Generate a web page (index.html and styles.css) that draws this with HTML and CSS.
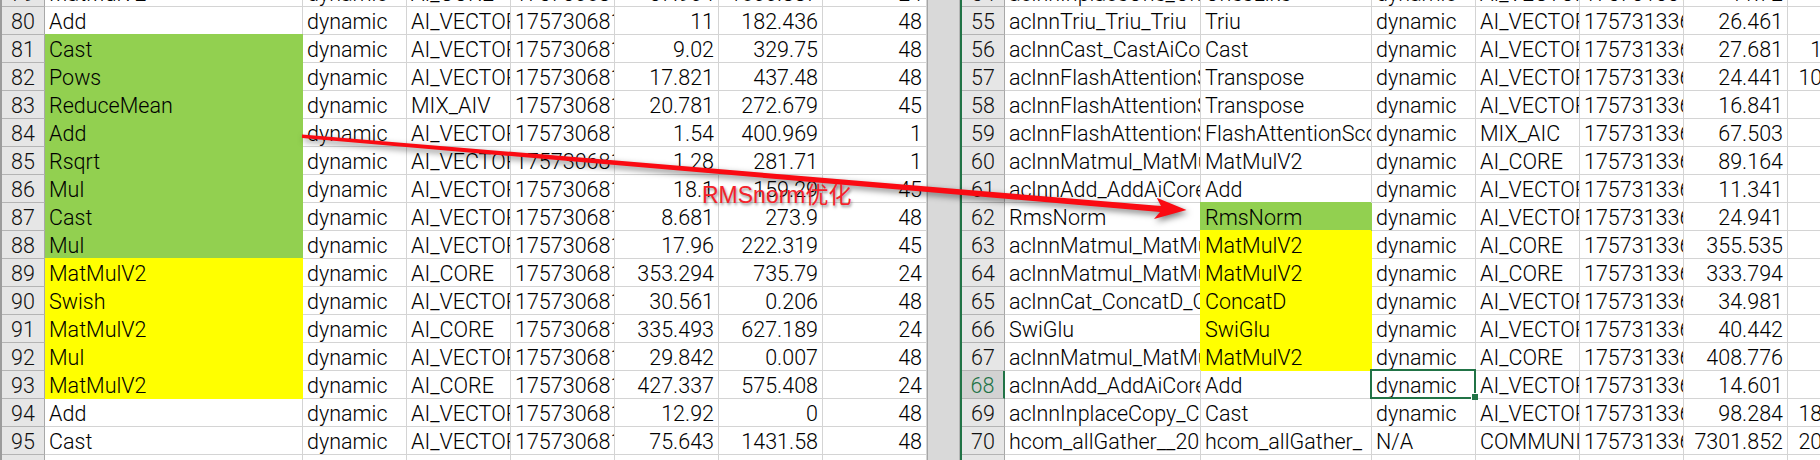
FILE: index.html
```html
<!DOCTYPE html>
<html lang="en">
<head>
<meta charset="utf-8">
<title>Sheet comparison</title>
<link rel="stylesheet" href="styles.css">
</head>
<body>
<div class="app">
  <section class="pane left">
    <div class="rows">
      <div class="row"><div class="h">79</div><div class="c">MatMulV2</div><div class="c">dynamic</div><div class="c">AI_CORE</div><div class="c">1757306815</div><div class="c n">37.904</div><div class="c n">1600.887</div><div class="c n">24</div></div>
      <div class="row"><div class="h">80</div><div class="c">Add</div><div class="c">dynamic</div><div class="c">AI_VECTOR_CORE</div><div class="c">1757306815</div><div class="c n">11</div><div class="c n">182.436</div><div class="c n">48</div></div>
      <div class="row"><div class="h">81</div><div class="c g">Cast</div><div class="c">dynamic</div><div class="c">AI_VECTOR_CORE</div><div class="c">1757306815</div><div class="c n">9.02</div><div class="c n">329.75</div><div class="c n">48</div></div>
      <div class="row"><div class="h">82</div><div class="c g">Pows</div><div class="c">dynamic</div><div class="c">AI_VECTOR_CORE</div><div class="c">1757306815</div><div class="c n">17.821</div><div class="c n">437.48</div><div class="c n">48</div></div>
      <div class="row"><div class="h">83</div><div class="c g">ReduceMean</div><div class="c">dynamic</div><div class="c">MIX_AIV</div><div class="c">1757306815</div><div class="c n">20.781</div><div class="c n">272.679</div><div class="c n">45</div></div>
      <div class="row"><div class="h">84</div><div class="c g">Add</div><div class="c">dynamic</div><div class="c">AI_VECTOR_CORE</div><div class="c">1757306815</div><div class="c n">1.54</div><div class="c n">400.969</div><div class="c n">1</div></div>
      <div class="row"><div class="h">85</div><div class="c g">Rsqrt</div><div class="c">dynamic</div><div class="c">AI_VECTOR_CORE</div><div class="c">1757306815</div><div class="c n">1.28</div><div class="c n">281.71</div><div class="c n">1</div></div>
      <div class="row"><div class="h">86</div><div class="c g">Mul</div><div class="c">dynamic</div><div class="c">AI_VECTOR_CORE</div><div class="c">1757306815</div><div class="c n">18.1</div><div class="c n">159.29</div><div class="c n">45</div></div>
      <div class="row"><div class="h">87</div><div class="c g">Cast</div><div class="c">dynamic</div><div class="c">AI_VECTOR_CORE</div><div class="c">1757306815</div><div class="c n">8.681</div><div class="c n">273.9</div><div class="c n">48</div></div>
      <div class="row"><div class="h">88</div><div class="c g">Mul</div><div class="c">dynamic</div><div class="c">AI_VECTOR_CORE</div><div class="c">1757306815</div><div class="c n">17.96</div><div class="c n">222.319</div><div class="c n">45</div></div>
      <div class="row"><div class="h">89</div><div class="c y">MatMulV2</div><div class="c">dynamic</div><div class="c">AI_CORE</div><div class="c">1757306815</div><div class="c n">353.294</div><div class="c n">735.79</div><div class="c n">24</div></div>
      <div class="row"><div class="h">90</div><div class="c y">Swish</div><div class="c">dynamic</div><div class="c">AI_VECTOR_CORE</div><div class="c">1757306815</div><div class="c n">30.561</div><div class="c n">0.206</div><div class="c n">48</div></div>
      <div class="row"><div class="h">91</div><div class="c y">MatMulV2</div><div class="c">dynamic</div><div class="c">AI_CORE</div><div class="c">1757306815</div><div class="c n">335.493</div><div class="c n">627.189</div><div class="c n">24</div></div>
      <div class="row"><div class="h">92</div><div class="c y">Mul</div><div class="c">dynamic</div><div class="c">AI_VECTOR_CORE</div><div class="c">1757306815</div><div class="c n">29.842</div><div class="c n">0.007</div><div class="c n">48</div></div>
      <div class="row"><div class="h">93</div><div class="c y">MatMulV2</div><div class="c">dynamic</div><div class="c">AI_CORE</div><div class="c">1757306815</div><div class="c n">427.337</div><div class="c n">575.408</div><div class="c n">24</div></div>
      <div class="row"><div class="h">94</div><div class="c">Add</div><div class="c">dynamic</div><div class="c">AI_VECTOR_CORE</div><div class="c">1757306815</div><div class="c n">12.92</div><div class="c n">0</div><div class="c n">48</div></div>
      <div class="row"><div class="h">95</div><div class="c">Cast</div><div class="c">dynamic</div><div class="c">AI_VECTOR_CORE</div><div class="c">1757306815</div><div class="c n">75.643</div><div class="c n">1431.58</div><div class="c n">48</div></div>
      <div class="row"><div class="h"></div><div class="c"></div><div class="c"></div><div class="c"></div><div class="c"></div><div class="c"></div><div class="c"></div><div class="c"></div></div>
    </div>
  </section>
  <div class="splitter"></div>
  <section class="pane right">
    <div class="rows">
      <div class="row"><div class="h">54</div><div class="c">aclnnInplaceOne_OnesLike</div><div class="c">OnesLike</div><div class="c">dynamic</div><div class="c">AI_VECTOR_CORE</div><div class="c">1757313361234</div><div class="c n">11.72</div><div class="c n"></div></div>
      <div class="row"><div class="h">55</div><div class="c">aclnnTriu_Triu_Triu</div><div class="c">Triu</div><div class="c">dynamic</div><div class="c">AI_VECTOR_CORE</div><div class="c">1757313361234</div><div class="c n">26.461</div><div class="c n"></div></div>
      <div class="row"><div class="h">56</div><div class="c">aclnnCast_CastAiCore_Cast</div><div class="c">Cast</div><div class="c">dynamic</div><div class="c">AI_VECTOR_CORE</div><div class="c">1757313361234</div><div class="c n">27.681</div><div class="c n">145.322</div></div>
      <div class="row"><div class="h">57</div><div class="c">aclnnFlashAttentionScore_Transpose</div><div class="c">Transpose</div><div class="c">dynamic</div><div class="c">AI_VECTOR_CORE</div><div class="c">1757313361234</div><div class="c n">24.441</div><div class="c n">1021.406</div></div>
      <div class="row"><div class="h">58</div><div class="c">aclnnFlashAttentionScore_Transpose</div><div class="c">Transpose</div><div class="c">dynamic</div><div class="c">AI_VECTOR_CORE</div><div class="c">1757313361234</div><div class="c n">16.841</div><div class="c n"></div></div>
      <div class="row"><div class="h">59</div><div class="c">aclnnFlashAttentionScore_FlashAttentionScore</div><div class="c">FlashAttentionScore</div><div class="c">dynamic</div><div class="c">MIX_AIC</div><div class="c">1757313361234</div><div class="c n">67.503</div><div class="c n"></div></div>
      <div class="row"><div class="h">60</div><div class="c">aclnnMatmul_MatMulV2_MatMulV2</div><div class="c">MatMulV2</div><div class="c">dynamic</div><div class="c">AI_CORE</div><div class="c">1757313361234</div><div class="c n">89.164</div><div class="c n">612.38</div></div>
      <div class="row"><div class="h">61</div><div class="c">aclnnAdd_AddAiCore_Add</div><div class="c">Add</div><div class="c">dynamic</div><div class="c">AI_VECTOR_CORE</div><div class="c">1757313361234</div><div class="c n">11.341</div><div class="c n"></div></div>
      <div class="row"><div class="h">62</div><div class="c">RmsNorm</div><div class="c g">RmsNorm</div><div class="c">dynamic</div><div class="c">AI_VECTOR_CORE</div><div class="c">1757313361234</div><div class="c n">24.941</div><div class="c n">245.19</div></div>
      <div class="row"><div class="h">63</div><div class="c">aclnnMatmul_MatMulV2_MatMulV2</div><div class="c y">MatMulV2</div><div class="c">dynamic</div><div class="c">AI_CORE</div><div class="c">1757313361234</div><div class="c n">355.535</div><div class="c n">431.02</div></div>
      <div class="row"><div class="h">64</div><div class="c">aclnnMatmul_MatMulV2_MatMulV2</div><div class="c y">MatMulV2</div><div class="c">dynamic</div><div class="c">AI_CORE</div><div class="c">1757313361234</div><div class="c n">333.794</div><div class="c n"></div></div>
      <div class="row"><div class="h">65</div><div class="c">aclnnCat_ConcatD_ConcatD</div><div class="c y">ConcatD</div><div class="c">dynamic</div><div class="c">AI_VECTOR_CORE</div><div class="c">1757313361234</div><div class="c n">34.981</div><div class="c n"></div></div>
      <div class="row"><div class="h">66</div><div class="c">SwiGlu</div><div class="c y">SwiGlu</div><div class="c">dynamic</div><div class="c">AI_VECTOR_CORE</div><div class="c">1757313361234</div><div class="c n">40.442</div><div class="c n"></div></div>
      <div class="row"><div class="h">67</div><div class="c">aclnnMatmul_MatMulV2_MatMulV2</div><div class="c y">MatMulV2</div><div class="c">dynamic</div><div class="c">AI_CORE</div><div class="c">1757313361234</div><div class="c n">408.776</div><div class="c n">318.52</div></div>
      <div class="row"><div class="h on">68</div><div class="c">aclnnAdd_AddAiCore_Add</div><div class="c">Add</div><div class="c sel">dynamic</div><div class="c">AI_VECTOR_CORE</div><div class="c">1757313361234</div><div class="c n">14.601</div><div class="c n"></div></div>
      <div class="row"><div class="h">69</div><div class="c">aclnnInplaceCopy_Cast_Cast</div><div class="c">Cast</div><div class="c">dynamic</div><div class="c">AI_VECTOR_CORE</div><div class="c">1757313361234</div><div class="c n">98.284</div><div class="c n">1832.155</div></div>
      <div class="row"><div class="h">70</div><div class="c">hcom_allGather__206_0_1</div><div class="c">hcom_allGather_</div><div class="c">N/A</div><div class="c">COMMUNICATION</div><div class="c">1757313361234</div><div class="c n">7301.852</div><div class="c n">2043.118</div></div>
      <div class="row"><div class="h"></div><div class="c"></div><div class="c"></div><div class="c"></div><div class="c"></div><div class="c"></div><div class="c"></div><div class="c"></div></div>
    </div>
  </section>
  <svg class="arrow" width="1820" height="460" viewBox="0 0 1820 460" aria-hidden="true">
    <path d="M302 134.4 L1161 206 L1156.7 197.7 L1186.5 210 L1154 219 L1160 212 L302 138 Z" fill="#fa0a12"/>
  </svg>
  <div class="note">RMSnorm优化</div>
</div>
</body>
</html>
```

FILE: styles.css
```css
* { box-sizing: border-box; }

html, body {
  margin: 0;
  background: #fff;
}

.app {
  position: relative;
  display: flex;
  width: 1820px;
  height: 460px;
  overflow: hidden;
  font-family: Roboto, "Liberation Sans", Arial, sans-serif;
  font-size: 21.5px;
  font-weight: 300;
  color: #000;
}

.pane {
  height: 460px;
  overflow: hidden;
}

.pane.left {
  flex: 0 0 927px;
  border-left: 2px solid #9c9c9c;
}

.pane.right {
  flex: 1 1 0;
  min-width: 0;
  border-left: 2px solid #217346;
}

.splitter {
  flex: 0 0 33px;
  background: #d9d9d9;
  border-left: 1px solid #a6a6a6;
  border-right: 1px solid #b4b4b4;
}

.rows {
  margin-top: -21px;
}

.row {
  display: grid;
  height: 28px;
}

.left .row {
  grid-template-columns: 43px 258px repeat(6, 104px);
}

.right .row {
  grid-template-columns: 43px 196px 171px repeat(5, 104px);
}

.h {
  padding-top: 3px;
  background: #e6e6e6;
  border-right: 1px solid #a8a8a8;
  border-bottom: 1px solid #b4b4b4;
  text-align: center;
  line-height: 24px;
  color: #111;
}

.h.on {
  background: #d2d2d2;
  color: #217346;
  border-right: 2px solid #217346;
}

.c {
  min-width: 0;
  padding: 3px 0 0 4px;
  border-right: 1px solid #d4d4d4;
  border-bottom: 1px solid #d4d4d4;
  line-height: 24px;
  white-space: nowrap;
  overflow: hidden;
}

.n {
  padding: 3px 4px 0 0;
  text-align: right;
}

.g {
  background: #92d050;
  border-color: #92d050;
  box-shadow: 0 -1px 0 #92d050;
}

.y {
  background: #ffff00;
  border-color: #ffff00;
  box-shadow: 0 -1px 0 #ffff00;
}

.right .g {
  box-shadow: -1px -1px 0 #92d050;
}

.right .y {
  box-shadow: -1px -1px 0 #ffff00;
}

.sel {
  position: relative;
  overflow: visible;
}

.sel::before {
  content: "";
  position: absolute;
  left: -2px;
  top: -2px;
  right: -1px;
  bottom: -1px;
  border: 2px solid #217346;
}

.sel::after {
  content: "";
  position: absolute;
  right: -3px;
  bottom: -2px;
  width: 6px;
  height: 6px;
  background: #217346;
  border-left: 1px solid #fff;
  border-top: 1px solid #fff;
}

.arrow {
  position: absolute;
  left: 0;
  top: 0;
  filter: drop-shadow(2px 3px 3px rgba(0, 0, 0, 0.5));
}

.note {
  position: absolute;
  left: 702px;
  top: 181px;
  font-family: "Liberation Sans", "Noto Sans CJK SC", sans-serif;
  font-size: 23px;
  font-weight: 400;
  line-height: 28px;
  color: #f4222a;
  text-shadow: 1px 2px 3px rgba(0, 0, 0, 0.45);
  white-space: nowrap;
}
```
